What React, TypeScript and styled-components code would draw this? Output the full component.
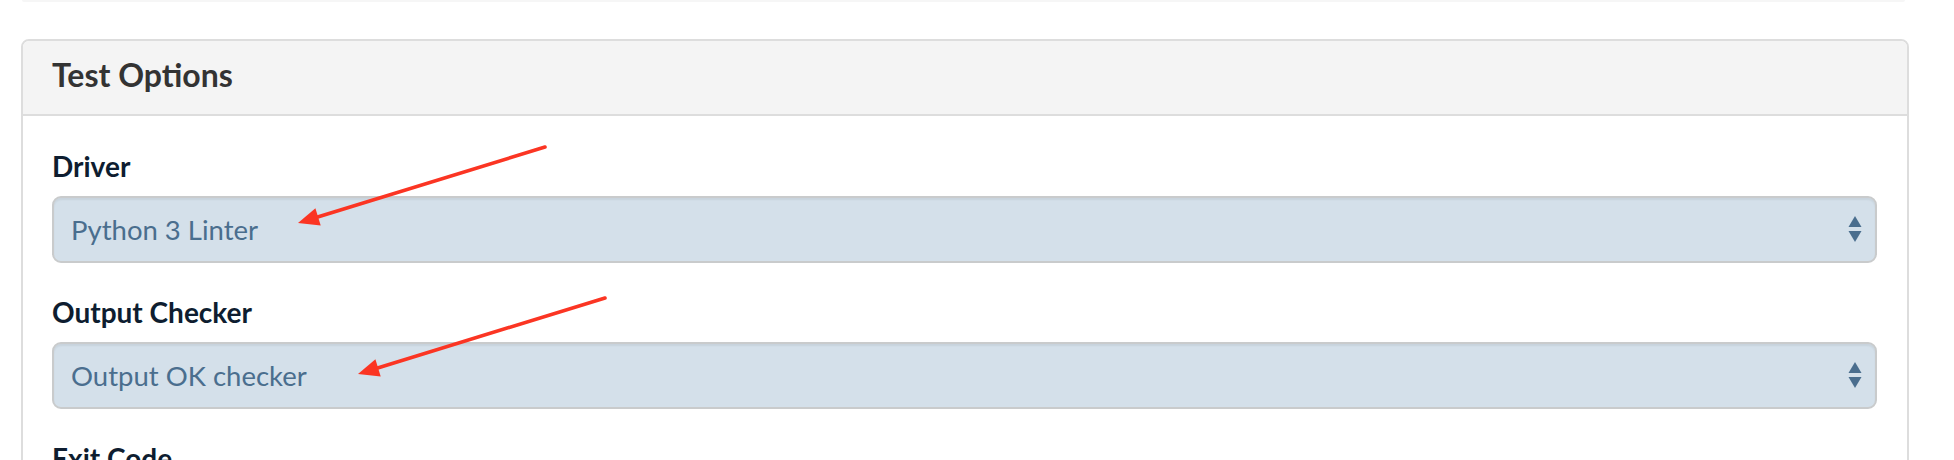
import React from "react";
import styled, { createGlobalStyle } from "styled-components";

const Global = createGlobalStyle`
  html, body { margin: 0; padding: 0; background: #ffffff; }
  body { font-family: Lato, "Open Sans", "Liberation Sans", sans-serif; }
  * { box-sizing: border-box; }
`;

const Page = styled.div`
  position: relative;
  width: 1954px;
  height: 460px;
  overflow: hidden;
  padding: 0 45px 0 21px;
`;

const PrevCardEdge = styled.div`
  height: 2px;
  margin: 0 4px 0 1px;
  background: #f6f6f6;
  border-radius: 0 0 4px 4px;
`;

const Card = styled.section`
  margin-top: 37px;
  border: 2px solid #dddddd;
  border-radius: 8px;
  overflow: hidden;
`;

const CardHeader = styled.header`
  background: #f4f4f4;
  border-bottom: 2px solid #dddddd;
  height: 75px;
  padding: 14px 29px 0;
`;

const Title = styled.h3`
  margin: 0;
  font-family: Lato, "Liberation Sans", sans-serif;
  font-weight: 700;
  font-size: 32px;
  line-height: 40px;
  color: #333333;
`;

const CardBody = styled.div`
  padding: 33px 30px 0 29px;
  display: flex;
  flex-direction: column;
  gap: 32px;
`;

const Field = styled.div`
  display: flex;
  flex-direction: column;
  gap: 13px;
`;

const Label = styled.label`
  font-family: Lato, "Liberation Sans", sans-serif;
  font-weight: 700;
  font-size: 28px;
  line-height: 34px;
  color: #0e1d30;
`;

const SelectBox = styled.div`
  height: 67px;
  display: flex;
  align-items: center;
  justify-content: space-between;
  padding: 0 13px 0 17px;
  background: #d4e0ea;
  border: 2px solid #c9cbcc;
  border-radius: 9px;
  box-shadow: inset 0 2px 2px rgba(0, 0, 0, 0.06);
  font-family: Lato, "Liberation Sans", sans-serif;
  font-size: 27.5px;
  color: #4a6e8e;
`;

const Updown = () => (
  <svg width="14" height="28" viewBox="0 0 14 28">
    <polygon points="7,0 13.5,11 0.5,11" fill="#4a6e8e" />
    <polygon points="0.5,15 13.5,15 7,26" fill="#4a6e8e" />
  </svg>
);

const Overlay = styled.svg`
  position: absolute;
  left: 0;
  top: 0;
  pointer-events: none;
`;

type ArrowProps = { x1: number; y1: number; x2: number; y2: number };

const Arrow = ({ x1, y1, x2, y2 }: ArrowProps) => {
  const dx = x2 - x1;
  const dy = y2 - y1;
  const len = Math.hypot(dx, dy);
  const ux = dx / len;
  const uy = dy / len;
  const hl = 21;
  const hw = 9;
  const bx = x2 - ux * hl;
  const by = y2 - uy * hl;
  const px = -uy;
  const py = ux;
  const pts = `${x2},${y2} ${bx + px * hw},${by + py * hw} ${bx - px * hw},${by - py * hw}`;
  return (
    <g>
      <line x1={x1} y1={y1} x2={bx + ux * 3} y2={by + uy * 3} stroke="#fb3523" strokeWidth={3.6} strokeLinecap="round" />
      <polygon points={pts} fill="#fb3523" />
    </g>
  );
};

const fields = [
  { label: "Driver", value: "Python 3 Linter" },
  { label: "Output Checker", value: "Output OK checker" },
  { label: "Exit Code", value: "" },
];

export default function App() {
  return (
    <Page>
      <Global />
      <PrevCardEdge />
      <Card>
        <CardHeader>
          <Title>Test Options</Title>
        </CardHeader>
        <CardBody>
          {fields.map((f) => (
            <Field key={f.label}>
              <Label>{f.label}</Label>
              <SelectBox>
                <span>{f.value}</span>
                <Updown />
              </SelectBox>
            </Field>
          ))}
        </CardBody>
      </Card>
      <Overlay width={1954} height={460}>
        <Arrow x1={545} y1={147} x2={298} y2={223} />
        <Arrow x1={605} y1={298} x2={358} y2={374} />
      </Overlay>
    </Page>
  );
}
